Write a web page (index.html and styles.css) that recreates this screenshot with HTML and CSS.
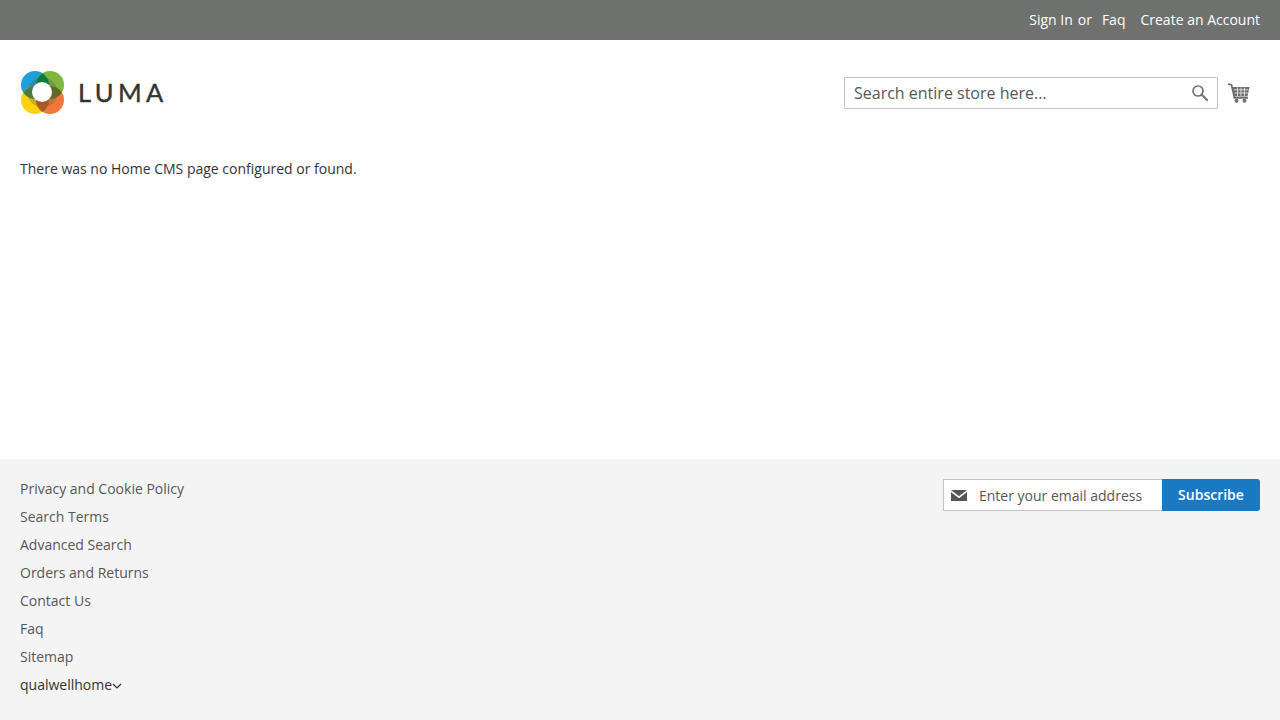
FILE: index.html
```html
<!DOCTYPE html>
<html lang="en">
<head>
<meta charset="utf-8">
<title>Home page</title>
<link rel="stylesheet" href="styles.css">
</head>
<body>
<div class="page">
  <div class="topbar">
    <ul class="toplinks">
      <li class="signin"><a href="#">Sign In</a><span class="or">or</span></li>
      <li class="faq"><a href="#">Faq</a></li>
      <li><a href="#">Create an Account</a></li>
    </ul>
  </div>
  <header class="header">
    <a class="logo" href="#">
      <svg class="logo-mark" width="46" height="46" viewBox="0 0 46 46" aria-hidden="true">
        <circle cx="15" cy="15" r="14" fill="#1e9fd8"/>
        <circle cx="30" cy="15" r="14" fill="#7cb83e"/>
        <circle cx="15" cy="30" r="14" fill="#fcd210"/>
        <circle cx="30" cy="30" r="14" fill="#f2773a"/>
        <circle cx="22.500" cy="22.500" r="15" fill="#555" opacity=".3"/>
        <path d="M22.500 3.200A14 14 0 0 1 22.500 26.800A14 14 0 0 1 22.500 3.200z" fill="#0f7a3c"/>
        <path d="M3.200 22.500A14 14 0 0 1 26.800 22.500A14 14 0 0 1 3.200 22.500z" fill="#4a7b42"/>
        <path d="M18.200 22.500A14 14 0 0 1 41.800 22.500A14 14 0 0 1 18.200 22.500z" fill="#5e6a25"/>
        <path d="M22.500 18.200A14 14 0 0 1 22.500 41.800A14 14 0 0 1 22.500 18.200z" fill="#a85a25"/>
        <circle cx="22" cy="22" r="10" fill="#fff"/>
      </svg>
      <span class="logo-text">LUMA</span>
    </a>
    <div class="header-tools">
      <form class="search">
        <input class="search-input" type="text" placeholder="Search entire store here...">
        <svg class="search-icon" width="18" height="18" viewBox="0 0 18 18" aria-hidden="true">
          <circle cx="7" cy="7" r="5" fill="none" stroke="#757575" stroke-width="1.700"/>
          <path d="M10.800 10.800 16 16" stroke="#757575" stroke-width="2.200" stroke-linecap="round"/>
        </svg>
      </form>
      <a class="cart" href="#" aria-label="My Cart">
        <svg width="22" height="20" viewBox="0 0 22 20" aria-hidden="true">
          <path d="M0 0.900 3.500 1.900 6.500 14.800H20" fill="none" stroke="#6e6e6e" stroke-width="1.800"/>
          <path d="M4.500 4H21.500L19.500 13.500H6.500z" fill="#6e6e6e"/>
          <path d="M6 6.800H20.500M6.500 10H20M9.500 4.500V13M13 4.500V13M16.500 4.500V13" stroke="#fff" stroke-width=".7"/>
          <circle cx="8.500" cy="17.800" r="2" fill="#6e6e6e"/>
          <circle cx="16.500" cy="17.800" r="2" fill="#6e6e6e"/>
        </svg>
      </a>
    </div>
  </header>
  <main class="main">
    <p>There was no Home CMS page configured or found.</p>
  </main>
  <footer class="footer">
    <ul class="footer-links">
      <li><a href="#">Privacy and Cookie Policy</a></li>
      <li><a href="#">Search Terms</a></li>
      <li><a href="#">Advanced Search</a></li>
      <li><a href="#">Orders and Returns</a></li>
      <li><a href="#">Contact Us</a></li>
      <li><a href="#">Faq</a></li>
      <li><a href="#">Sitemap</a></li>
      <li class="switcher">qualwellhome<svg width="10" height="6" viewBox="0 0 10 6" aria-hidden="true"><path d="M1 1 5 5 9 1" fill="none" stroke="#333" stroke-width="1.200"/></svg></li>
    </ul>
    <form class="newsletter">
      <div class="email">
        <svg class="mail-icon" width="16" height="11" viewBox="0 0 16 11" aria-hidden="true">
          <path d="M0 0H16L8 6.200z" fill="#555"/>
          <path d="M0 2 8 8.200 16 2V11H0z" fill="#555"/>
        </svg>
        <input class="email-input" type="text" placeholder="Enter your email address">
      </div>
      <button class="subscribe" type="button">Subscribe</button>
    </form>
  </footer>
</div>
</body>
</html>
```
FILE: styles.css
```css
* { box-sizing: border-box; }
html, body { margin: 0; padding: 0; }
body {
  font-family: "Open Sans", "Liberation Sans", sans-serif;
  font-size: 14px;
  line-height: 20px;
  color: #333;
  background: #fff;
}
a { text-decoration: none; color: inherit; }
ul { list-style: none; margin: 0; padding: 0; }
.page {
  display: flex;
  flex-direction: column;
  min-height: 720px;
  height: 720px;
  overflow: hidden;
}
.topbar {
  height: 40px;
  background: #6e716e;
  display: flex;
  justify-content: flex-end;
  align-items: center;
  padding: 0 20px;
  color: #fff;
}
.toplinks { display: flex; }
.or { margin-left: 5px; }
.signin { margin-right: 10px; }
.faq { margin-right: 15px; }
.header {
  height: 89px;
  padding: 0 20px;
  display: flex;
  justify-content: space-between;
  align-items: flex-start;
}
.logo { display: flex; align-items: center; margin-top: 30px; height: 46px; }
.logo-mark { display: block; }
.logo-text {
  font-family: Lato, "Open Sans", sans-serif;
  font-size: 25.500px;
  line-height: 46px;
  font-weight: 400;
  letter-spacing: 4.400px;
  color: #333;
  -webkit-text-stroke: 0.4px #333;
  margin: -3px 0 0 12px;
}
.header-tools { display: flex; align-items: flex-start; margin-top: 37px; }
.search { position: relative; width: 374px; height: 32px; }
.search-input {
  width: 100%;
  height: 32px;
  border: 1px solid #c2c2c2;
  border-radius: 1px;
  padding: 0 40px 0 9px;
  font: 16px/30px "Open Sans", "Liberation Sans", sans-serif;
  color: #575757;
  background: #fff;
  outline: none;
}
.search-input::placeholder { color: #575757; opacity: 1; }
.search-icon { position: absolute; right: 9px; top: 7px; }
.cart { display: block; margin: 6px 10px 0 10px; height: 20px; }
.cart svg { display: block; }
.main { flex: 1; padding: 30px 20px 0; }
.main p { margin: 0; }
.footer {
  height: 261px;
  background: #f4f4f4;
  padding: 20px 20px 0;
  display: flex;
  justify-content: space-between;
  align-items: flex-start;
}
.footer-links { display: flex; flex-direction: column; gap: 8px; color: #575757; }
.switcher { color: #333; display: flex; align-items: center; }
.switcher svg { margin-top: 2px; }
.newsletter { display: flex; width: 317px; height: 32px; }
.email {
  position: relative;
  width: 219px;
  height: 32px;
  border: 1px solid #c2c2c2;
  border-right: 0;
  border-radius: 1px 0 0 1px;
  background: #fff;
}
.mail-icon { position: absolute; left: 7px; top: 10px; }
.email-input {
  width: 100%;
  height: 30px;
  border: 0;
  padding: 1px 10px 0 35px;
  font: 14px/29px "Open Sans", "Liberation Sans", sans-serif;
  color: #575757;
  background: transparent;
  outline: none;
}
.email-input::placeholder { color: #575757; opacity: 1; }
.subscribe {
  flex: 1;
  height: 32px;
  border: 0;
  border-radius: 0 3px 3px 0;
  background: #1979c3;
  color: #fff;
  font: 600 14px/16px "Open Sans", "Liberation Sans", sans-serif;
  padding: 0;
}
```
